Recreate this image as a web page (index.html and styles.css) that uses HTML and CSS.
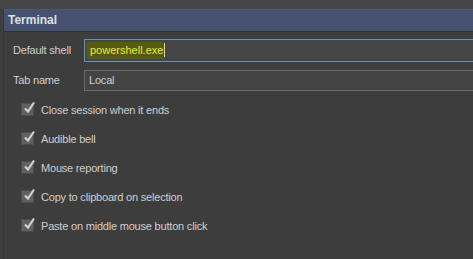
FILE: index.html
```html
<!DOCTYPE html>
<html>
<head>
<meta charset="utf-8">
<link rel="stylesheet" href="styles.css">
</head>
<body>
<div class="top"></div>
<div class="section">
  <div class="header">Terminal</div>
  <div class="panel">
    <div class="field">
      <span class="label">Default shell</span>
      <div class="input focused"><span class="hl">powershell.exe</span><span class="caret"></span></div>
    </div>
    <div class="field">
      <span class="label">Tab name</span>
      <div class="input">Local</div>
    </div>
    <div class="checks">
      <div class="check"><span class="box"><svg viewBox="0 0 14 14" width="14" height="14"><path d="M3 7.5 L6 10.5 L12 1.5" fill="none" stroke="#d0d0d0" stroke-width="2.2"/></svg></span>Close session when it ends</div>
      <div class="check"><span class="box"><svg viewBox="0 0 14 14" width="14" height="14"><path d="M3 7.5 L6 10.5 L12 1.5" fill="none" stroke="#d0d0d0" stroke-width="2.2"/></svg></span>Audible bell</div>
      <div class="check"><span class="box"><svg viewBox="0 0 14 14" width="14" height="14"><path d="M3 7.5 L6 10.5 L12 1.5" fill="none" stroke="#d0d0d0" stroke-width="2.2"/></svg></span>Mouse reporting</div>
      <div class="check"><span class="box"><svg viewBox="0 0 14 14" width="14" height="14"><path d="M3 7.5 L6 10.5 L12 1.5" fill="none" stroke="#d0d0d0" stroke-width="2.2"/></svg></span>Copy to clipboard on selection</div>
      <div class="check"><span class="box"><svg viewBox="0 0 14 14" width="14" height="14"><path d="M3 7.5 L6 10.5 L12 1.5" fill="none" stroke="#d0d0d0" stroke-width="2.2"/></svg></span>Paste on middle mouse button click</div>
    </div>
  </div>
</div>
</body>
</html>
```
FILE: styles.css
```css
html, body {
  margin: 0;
  padding: 0;
  width: 473px;
  height: 259px;
  overflow: hidden;
  background: #3e3e3e;
  font-family: "Liberation Sans", Arial, sans-serif;
  font-size: 11px;
  letter-spacing: -0.2px;
  color: #cfcfcf;
}
.top {
  height: 9px;
  background: #454545;
}
.section {
  margin-left: 3px;
  border-left: 1px solid #363636;
  height: 250px;
  overflow: hidden;
}
.header {
  height: 21px;
  background: #465170;
  border-top: 1px solid #4c5879;
  border-bottom: 1px solid #2c313c;
  color: #dde0e6;
  font-weight: bold;
  font-size: 12px;
  letter-spacing: 0;
  line-height: 21px;
  padding-left: 4px;
}
.panel {
  background: #3d3d3d;
  padding: 3px 0 0 9px;
  height: 230px;
}
.field {
  display: flex;
  align-items: center;
  height: 30px;
  margin-right: -4px;
}
.label {
  width: 71px;
  flex: none;
}
.input {
  flex: 1;
  height: 21px;
  box-sizing: border-box;
  border: 1px solid #6a6c6a;
  background: #444444;
  display: flex;
  align-items: center;
  padding-left: 4px;
}
.input.focused {
  height: 23px;
  border: 1px solid #6f8fad;
  box-shadow: inset 0 0 0 1px #3b4652;
  background: #464646;
  padding-left: 2px;
}
.hl {
  background: #585a12;
  color: #e8ea40;
  font-size: 11px;
  letter-spacing: 0;
  padding: 2px 1px 3px 3px;
  border-radius: 2px;
  box-shadow: 0 0 2px #585a12;
}
.caret {
  display: inline-block;
  width: 1px;
  height: 14px;
  background: #d8d8a0;
}
.checks {
  display: flex;
  flex-direction: column;
  padding-left: 8px;
}
.check {
  display: flex;
  align-items: center;
  height: 29px;
}
.box {
  width: 13px;
  height: 13px;
  background: #606060;
  border: 1px solid #4c4c4c;
  box-sizing: border-box;
  margin-right: 7px;
  position: relative;
  flex: none;
}
.box svg {
  position: absolute;
  left: 0;
  top: -3px;
}
```
